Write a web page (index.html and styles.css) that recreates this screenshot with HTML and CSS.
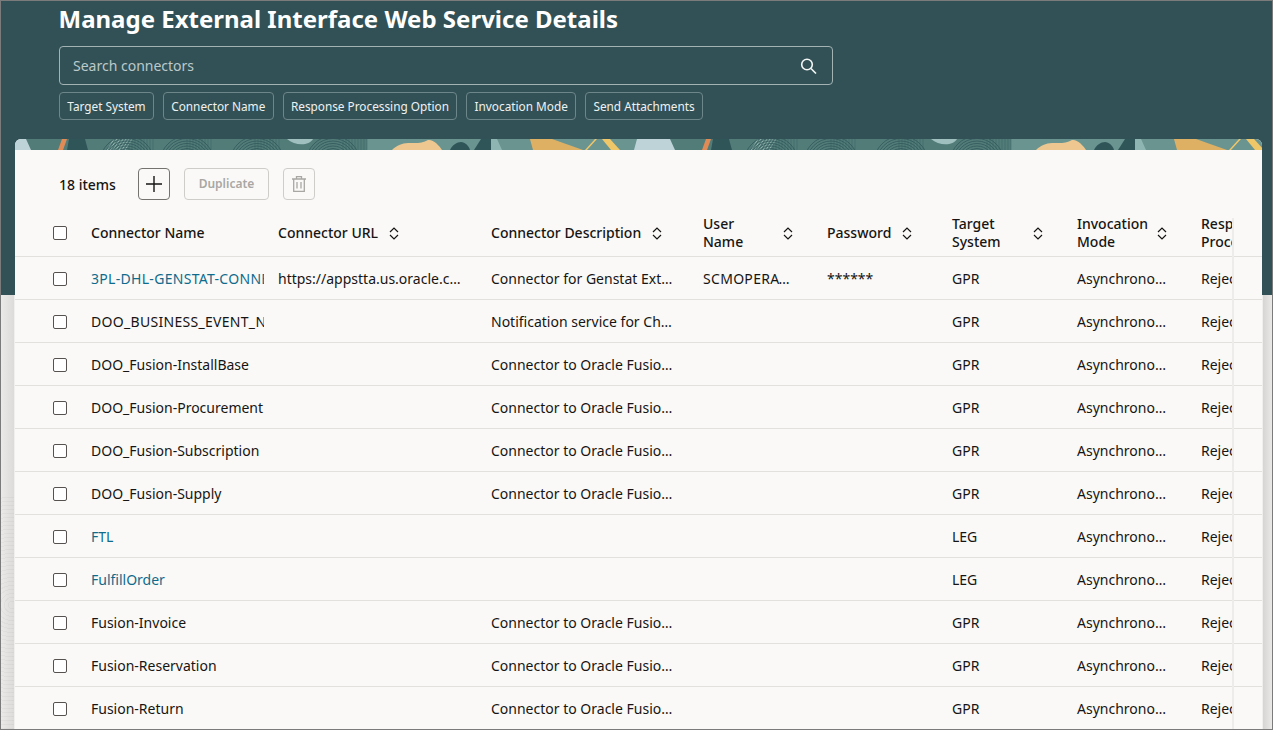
FILE: index.html
```html
<!DOCTYPE html>
<html lang="en">
<head>
  <meta charset="UTF-8" />
  <title>Manage External Interface Web Service Details</title>
  <link rel="stylesheet" href="styles.css">
</head>
<body>
  <div class="header">
    <h1>Manage External Interface Web Service Details</h1>
    <div class="search">
      <span class="search-text">Search connectors</span>
      <svg class="search-icon" width="17" height="16" viewBox="0 0 17 16"><circle cx="7" cy="6.5" r="5.3"/><path d="M11 10.5l5 5"/></svg>
    </div>
    <div class="chips">
      <button class="chip">Target System</button>
      <button class="chip">Connector Name</button>
      <button class="chip">Response Processing Option</button>
      <button class="chip">Invocation Mode</button>
      <button class="chip">Send Attachments</button>
    </div>
  </div>

  <div class="card">
    <svg class="banner" width="1247" height="11">
      <defs>
        <g id="rings" fill="none" stroke="#2f5559" stroke-width="0.8">
          <circle r="12"/><circle r="14.5"/><circle r="17"/><circle r="19.5"/><circle r="22"/><circle r="24.5"/><circle r="27"/>
        </g>
        <g id="hatch" stroke="#2f5559" stroke-width="0.6" opacity="0.7">
          <path d="M0 0v11M3 0v11M6 0v11M9 0v11M12 0v11M15 0v11M18 0v11M21 0v11M24 0v11"/>
        </g>
        <g id="light-hatch" stroke="#b5d0cd" stroke-width="0.7">
          <path d="M0 11l7-11M3 11l7-11M6 11l7-11M9 11l7-11M12 11l7-11M15 11l7-11M18 11l7-11"/>
        </g>
        <pattern id="tile" width="644" height="11" patternUnits="userSpaceOnUse">
          <rect width="352" height="11" fill="#527c78"/>
          <rect x="352" width="292" height="11" fill="#6a9490"/>
          <path d="M0 0h11l5 11H0z" fill="#bdd3d8"/>
          <path d="M622 0h22v11h-25z" fill="#bdd3d8"/>
          <path d="M47 0h5l-4 11h-5z" fill="#e08a55"/>
          <path d="M54 0h16l3 11H52z" fill="#2f5559"/>
          <use href="#light-hatch" x="92"/>
          <use href="#rings" x="112" y="24"/>
          <use href="#hatch" x="114"/>
          <use href="#rings" x="172" y="24"/>
          <use href="#hatch" x="172"/>
          <use href="#rings" x="242" y="24"/>
          <use href="#hatch" x="240"/>
          <path d="M272 0h26c-4 7-18 7-26 0z" fill="#9fc0be"/>
          <use href="#rings" x="318" y="24"/>
          <use href="#hatch" x="328"/>
          <path d="M377 11c4-4 10-7 16-7s14 1 20-3c5-1 11 5 14 10z" fill="#edc78f"/>
          <path d="M435 11c2-5 7-8 11-8s8 4 9 8z" fill="#2f5559"/>
          <path d="M466 0h10v11h-17z" fill="#2f5559"/>
          <path d="M476 0h6l5 11h-11z" fill="#8fb5b3"/>
          <path d="M515 0h22l31 11h-50z" fill="#deb064"/>
          <path d="M580 0h2l-10 11h-2z" fill="#efc668"/>
          <path d="M587 0h8l10 11h-9z" fill="#efc668"/>
        </pattern>
      </defs>
      <rect width="1247" height="11" fill="url(#tile)"/>
    </svg>

    <div class="toolbar">
      <span class="count">18 items</span>
      <button class="tool-btn add-btn">
        <svg width="16" height="16" viewBox="0 0 16 16"><path d="M8 0v16M0 8h16"/></svg>
      </button>
      <button class="dup-btn" disabled>Duplicate</button>
      <button class="tool-btn trash-btn" disabled>
        <svg width="14" height="16" viewBox="0 0 14 16"><path d="M0 3h14M4.5 3V.7h5V3M1.7 3v12.3h10.6V3M5 6v6.5M9 6v6.5"/></svg>
      </button>
    </div>

    <table class="grid">
      <colgroup>
        <col class="c-check"><col class="c-name"><col class="c-url"><col class="c-desc"><col class="c-user"><col class="c-pass"><col class="c-target"><col class="c-mode"><col class="c-resp"><col class="c-end">
      </colgroup>
      <thead>
        <tr>
          <th class="check"><input type="checkbox"></th>
          <th>Connector Name</th>
          <th><div class="th-in"><span>Connector URL</span><svg class="sort" width="10" height="13" viewBox="0 0 10 13"><path d="M1 5l4-4 4 4M1 8l4 4 4-4"/></svg></div></th>
          <th><div class="th-in"><span>Connector Description</span><svg class="sort" width="10" height="13" viewBox="0 0 10 13"><path d="M1 5l4-4 4 4M1 8l4 4 4-4"/></svg></div></th>
          <th class="wide"><div class="th-in"><span>User<br>Name</span><svg class="sort" width="10" height="13" viewBox="0 0 10 13"><path d="M1 5l4-4 4 4M1 8l4 4 4-4"/></svg></div></th>
          <th><div class="th-in"><span>Password</span><svg class="sort" width="10" height="13" viewBox="0 0 10 13"><path d="M1 5l4-4 4 4M1 8l4 4 4-4"/></svg></div></th>
          <th class="wide"><div class="th-in"><span>Target<br>System</span><svg class="sort" width="10" height="13" viewBox="0 0 10 13"><path d="M1 5l4-4 4 4M1 8l4 4 4-4"/></svg></div></th>
          <th class="wide"><div class="th-in"><span>Invocation<br>Mode</span><svg class="sort" width="10" height="13" viewBox="0 0 10 13"><path d="M1 5l4-4 4 4M1 8l4 4 4-4"/></svg></div></th>
          <th class="resp">Response<br>Processing Option</th>
          <th></th>
        </tr>
      </thead>
      <tbody>
        <tr><td class="check"><input type="checkbox"></td><td class="name caps"><a href="#">3PL-DHL-GENSTAT-CONNECTOR</a></td><td>https://appstta.us.oracle.com/soa-infra/services</td><td>Connector for Genstat Extended Status Updates</td><td class="user caps">SCMOPERATIONS</td><td>******</td><td>GPR</td><td>Asynchronous Service</td><td class="resp">Reject</td><td></td></tr>
        <tr><td class="check"><input type="checkbox"></td><td class="name caps">DOO_BUSINESS_EVENT_NOTIFICATION</td><td></td><td>Notification service for Change Events</td><td></td><td></td><td>GPR</td><td>Asynchronous Service</td><td class="resp">Reject</td><td></td></tr>
        <tr><td class="check"><input type="checkbox"></td><td class="name">DOO_Fusion-InstallBase</td><td></td><td>Connector to Oracle Fusion Install Base</td><td></td><td></td><td>GPR</td><td>Asynchronous Service</td><td class="resp">Reject</td><td></td></tr>
        <tr><td class="check"><input type="checkbox"></td><td class="name">DOO_Fusion-Procurement</td><td></td><td>Connector to Oracle Fusion Procurement</td><td></td><td></td><td>GPR</td><td>Asynchronous Service</td><td class="resp">Reject</td><td></td></tr>
        <tr><td class="check"><input type="checkbox"></td><td class="name">DOO_Fusion-Subscription</td><td></td><td>Connector to Oracle Fusion Subscription</td><td></td><td></td><td>GPR</td><td>Asynchronous Service</td><td class="resp">Reject</td><td></td></tr>
        <tr><td class="check"><input type="checkbox"></td><td class="name">DOO_Fusion-Supply</td><td></td><td>Connector to Oracle Fusion Supply</td><td></td><td></td><td>GPR</td><td>Asynchronous Service</td><td class="resp">Reject</td><td></td></tr>
        <tr><td class="check"><input type="checkbox"></td><td class="name"><a href="#">FTL</a></td><td></td><td></td><td></td><td></td><td>LEG</td><td>Asynchronous Service</td><td class="resp">Reject</td><td></td></tr>
        <tr><td class="check"><input type="checkbox"></td><td class="name"><a href="#">FulfillOrder</a></td><td></td><td></td><td></td><td></td><td>LEG</td><td>Asynchronous Service</td><td class="resp">Reject</td><td></td></tr>
        <tr><td class="check"><input type="checkbox"></td><td class="name">Fusion-Invoice</td><td></td><td>Connector to Oracle Fusion Invoice</td><td></td><td></td><td>GPR</td><td>Asynchronous Service</td><td class="resp">Reject</td><td></td></tr>
        <tr><td class="check"><input type="checkbox"></td><td class="name">Fusion-Reservation</td><td></td><td>Connector to Oracle Fusion Reservation</td><td></td><td></td><td>GPR</td><td>Asynchronous Service</td><td class="resp">Reject</td><td></td></tr>
        <tr><td class="check"><input type="checkbox"></td><td class="name">Fusion-Return</td><td></td><td>Connector to Oracle Fusion Return</td><td></td><td></td><td>GPR</td><td>Asynchronous Service</td><td class="resp">Reject</td><td></td></tr>
      </tbody>
    </table>
    <div class="scroll-edge"></div>
  </div>
</body>
</html>
```
FILE: styles.css
```css
* {
  box-sizing: border-box;
}

html {
  height: 100%;
}

body {
  margin: 0;
  height: 730px;
  overflow: hidden;
  border: 1px solid #7b7b7b;
  font-family: "Noto Sans", "Open Sans", sans-serif;
  font-size: 14px;
  color: #161513;
  background:
    linear-gradient(#325156, #325156) 0 0 / 100% 295px no-repeat,
    repeating-radial-gradient(circle at 12px 110px, rgba(0,0,0,0) 0 3px, rgba(0,0,0,0.03) 3px 4px) 0 495px / 14px 240px no-repeat,
    linear-gradient(90deg, #ecebe9, #dcdbd9) 0 0 / 14px 100% no-repeat,
    linear-gradient(270deg, #ecebe9, #d6d5d3) 100% 0 / 10px 100% no-repeat,
    #f0efed;
}

.header {
  padding: 0 0 0 58px;
  height: 138px;
}

h1 {
  margin: 0 0 0 -0.5px;
  font-size: 24px;
  line-height: 36px;
  font-weight: 700;
  color: #fff;
}

.search {
  display: flex;
  align-items: center;
  justify-content: space-between;
  width: 774px;
  height: 39px;
  margin-top: 9px;
  padding: 0 15px 0 13px;
  border: 1px solid #a3b3b4;
  border-radius: 4px;
}

.search-text {
  color: #bcc9ca;
  font-size: 14px;
}

.search-icon {
  fill: none;
  stroke: #f4f6f6;
  stroke-width: 1.6;
}

.chips {
  display: flex;
  gap: 9px;
  margin-top: 7px;
}

.chip {
  height: 28px;
  padding: 0 7.3px;
  background: none;
  border: 1px solid #6d8689;
  border-radius: 4px;
  color: #eef2f2;
  font-family: inherit;
  font-size: 11.8px;
}

.card {
  position: relative;
  width: 1247px;
  height: 590px;
  margin-left: 14px;
  overflow: hidden;
  background: #faf9f7;
  border-radius: 6px 6px 0 0;
}

.banner {
  display: block;
}

.toolbar {
  display: flex;
  align-items: center;
  height: 32px;
  margin-top: 18px;
  padding-left: 44px;
}

.count {
  width: 79px;
  font-weight: 500;
}

.tool-btn {
  display: flex;
  align-items: center;
  justify-content: center;
  width: 32px;
  height: 32px;
  padding: 0;
  background: none;
  border-radius: 4px;
}

.tool-btn svg {
  fill: none;
}

.add-btn {
  border: 1px solid #75736f;
}

.add-btn svg {
  stroke: #161513;
  stroke-width: 1.4;
}

.dup-btn {
  width: 85px;
  height: 32px;
  margin: 0 14px;
  padding: 0 0 2px;
  background: none;
  border: 1px solid #cfcdca;
  border-radius: 4px;
  color: #a9a7a4;
  font-family: inherit;
  font-size: 12px;
  font-weight: 600;
}

.trash-btn {
  border: 1px solid #cfcdca;
}

.trash-btn svg {
  stroke: #a9a7a4;
  stroke-width: 1.3;
}

.grid {
  width: 1247px;
  margin-top: 8px;
  table-layout: fixed;
  border-collapse: separate;
  border-spacing: 0;
}

.c-check { width: 64px; }
.c-name { width: 185px; }
.c-url { width: 215px; }
.c-desc { width: 212px; }
.c-user { width: 124px; }
.c-pass { width: 125px; }
.c-target { width: 125px; }
.c-mode { width: 124px; }
.c-resp { width: 43px; }
.c-end { width: 30px; }

th,
td {
  padding: 0 18px 0 12px;
  border-bottom: 1px solid #e3e1de;
  text-align: left;
  white-space: nowrap;
  overflow: hidden;
  text-overflow: ellipsis;
}

th:nth-child(3),
td:nth-child(3) {
  padding-left: 14px;
}

th {
  height: 49px;
  padding-top: 2px;
  font-weight: 500;
  line-height: 18px;
}

td {
  height: 43px;
}

.th-in {
  display: flex;
  align-items: center;
  gap: 11px;
}

.wide {
  padding-right: 22px;
}

.wide .th-in {
  justify-content: space-between;
  gap: 0;
}

.sort {
  flex: none;
  fill: none;
  stroke: #161513;
  stroke-width: 1.2;
}

.check {
  padding: 2px 0 0 38px;
  line-height: 0;
}

.name {
  padding-right: 0;
  text-overflow: clip;
}

.user {
  padding-right: 22px;
}

.caps {
  letter-spacing: 0.3px;
}

.resp {
  padding-right: 0;
  text-overflow: clip;
}

a {
  color: #0f6b8c;
  text-decoration: none;
}

input[type="checkbox"] {
  appearance: none;
  display: inline-block;
  width: 14px;
  height: 14px;
  margin: 0;
  background: #fff;
  border: 1px solid #55524f;
  border-bottom-width: 1.5px;
  border-radius: 2px;
}

.scroll-edge {
  position: absolute;
  left: 1217px;
  top: 79px;
  bottom: 0;
  width: 2px;
  background: #eeecea;
}
```
